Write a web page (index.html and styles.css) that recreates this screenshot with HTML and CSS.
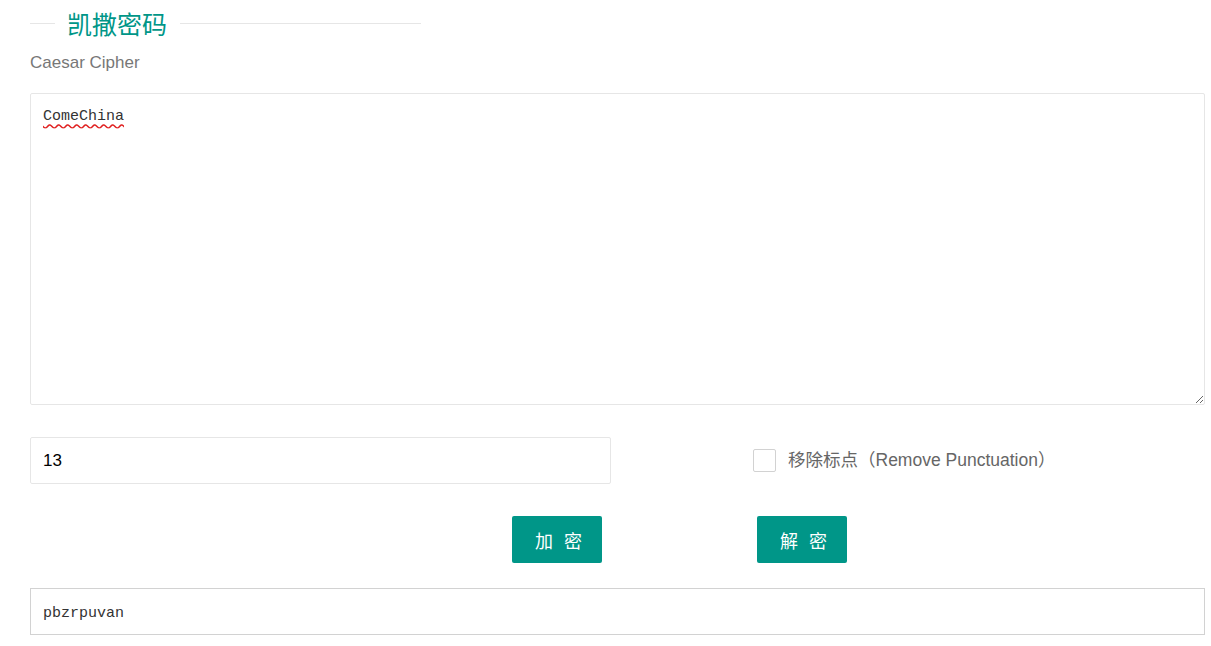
FILE: index.html
```html
<!DOCTYPE html>
<html lang="zh-CN">
<head>
    <meta charset="UTF-8">
    <meta name="viewport" content="width=device-width, initial-scale=1.0">
    <title>凯撒密码</title>
    <link rel="stylesheet" href="styles.css">
</head>
<body>

    <div class="page">
        <div class="legend">
            <span class="legend-line short"></span>
            <span class="legend-text">凯撒密码</span>
            <span class="legend-line long"></span>
        </div>
        <div class="subtitle">Caesar Cipher</div>

        <textarea class="source" id="source" spellcheck="false">ComeChina</textarea>

        <div class="options">
            <input type="text" class="shift" id="shift" value="13">
            <label class="check">
                <span class="check-box"></span>
                <span class="check-label">移除标点（Remove Punctuation）</span>
            </label>
        </div>

        <div class="actions">
            <button type="button" class="btn" onclick="run(1)">加 密</button>
            <button type="button" class="btn" onclick="run(-1)">解 密</button>
        </div>

        <div class="result" id="result">pbzrpuvan</div>
    </div>

    <script>
        function run(dir) {
            const text = document.getElementById("source").value;
            const shift = (parseInt(document.getElementById("shift").value) || 0) * dir;
            let out = "";
            for (const ch of text.toLowerCase()) {
                const c = ch.charCodeAt(0);
                if (c >= 97 && c <= 122) {
                    out += String.fromCharCode((((c - 97 + shift) % 26) + 26) % 26 + 97);
                } else {
                    out += ch;
                }
            }
            document.getElementById("result").textContent = out;
        }
    </script>
</body>
</html>
```

FILE: styles.css
```css
body {
    margin: 0;
    background: #fff;
    font-family: "Liberation Sans", "Noto Sans CJK SC", sans-serif;
    color: #666;
}
.page {
    padding: 8px 6px 0 30px;
}
.legend {
    display: flex;
    align-items: center;
    width: 391px;
    height: 30px;
}
.legend-line {
    height: 1px;
    background: #e6e6e6;
}
.legend-line.short {
    width: 25px;
}
.legend-line.long {
    flex: 1;
}
.legend-text {
    padding: 3px 13px 0 12px;
    font-size: 25px;
    line-height: 30px;
    color: #009688;
}
.subtitle {
    margin-top: 15px;
    font-size: 17px;
    line-height: 20px;
    color: #777;
}
.source {
    display: block;
    box-sizing: border-box;
    width: 100%;
    height: 312px;
    margin: 20px 0 0;
    padding: 13px 12px 10px;
    border: 1px solid #e6e6e6;
    border-radius: 2px;
    font-family: "Liberation Mono", monospace;
    font-size: 15px;
    line-height: 20px;
    color: #333;
    text-decoration: underline wavy #e02020;
    text-underline-offset: 3px;
    outline: none;
}
.options {
    display: flex;
    align-items: center;
    margin-top: 32px;
}
.shift {
    box-sizing: border-box;
    width: 581px;
    height: 47px;
    padding: 0 12px;
    border: 1px solid #e6e6e6;
    border-radius: 2px;
    font-family: "Liberation Sans", sans-serif;
    font-size: 17px;
    color: #000;
    outline: none;
}
.check {
    display: flex;
    align-items: center;
    margin-left: 142px;
}
.check-box {
    box-sizing: border-box;
    width: 23px;
    height: 23px;
    border: 1px solid #d2d2d2;
    border-radius: 2px;
}
.check-label {
    margin-left: 12px;
    padding-bottom: 4px;
    font-size: 17.5px;
    color: #666;
}
.actions {
    display: flex;
    margin-top: 32px;
    padding-left: 482px;
    gap: 155px;
}
.btn {
    width: 90px;
    height: 47px;
    padding: 0 0 0 6px;
    border: none;
    border-radius: 2px;
    background: #009688;
    color: #fff;
    font-family: "Liberation Sans", "Noto Sans CJK SC", sans-serif;
    font-size: 18px;
    letter-spacing: 3px;
    cursor: pointer;
}
.result {
    box-sizing: border-box;
    display: flex;
    align-items: center;
    height: 47px;
    margin-top: 25px;
    padding: 4px 12px 0;
    border: 1px solid #d2d2d2;
    font-family: "Liberation Mono", monospace;
    font-size: 15px;
    color: #333;
}
```
